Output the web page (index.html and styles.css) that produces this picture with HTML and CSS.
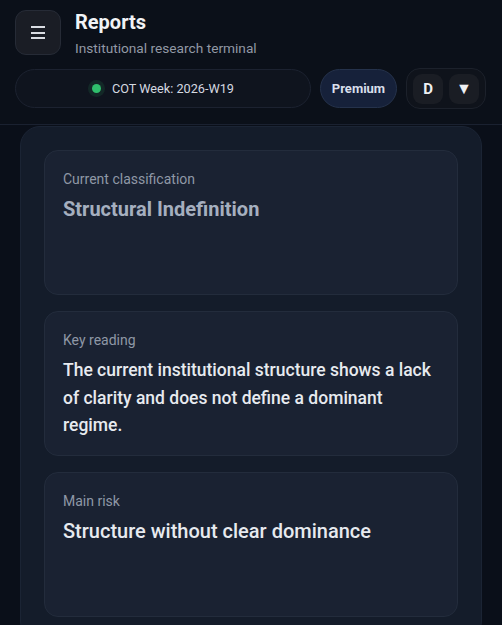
FILE: index.html
```html
<!DOCTYPE html>
<html>
<head>
  <title>Reports</title>
  <link rel="stylesheet" href="styles.css">
</head>
<body>
<div class="header">
  <div class="header-top">
    <button class="menu-btn" type="button">
      <span></span><span></span><span></span>
    </button>
    <div class="title-block">
      <h1>Reports</h1>
      <div class="subtitle">Institutional research terminal</div>
    </div>
  </div>
  <div class="header-bar">
    <div class="status-pill"><span class="dot"></span>COT Week: 2026-W19</div>
    <div class="plan-pill">Premium</div>
    <div class="user-group">
      <div class="user-btn">D</div>
      <div class="user-btn caret">&#9660;</div>
    </div>
  </div>
</div>

<div class="main">
  <div class="card">
    <div class="card-label">Current classification</div>
    <div class="card-value muted">Structural Indefinition</div>
  </div>
  <div class="card">
    <div class="card-label">Key reading</div>
    <div class="card-text">The current institutional structure shows a lack of clarity and does not define a dominant regime.</div>
  </div>
  <div class="card">
    <div class="card-label">Main risk</div>
    <div class="card-value">Structure without clear dominance</div>
  </div>
</div>
</body>
</html>
```

FILE: styles.css
```css
body {
  font-family: Roboto, "Liberation Sans", sans-serif;
  margin: 0;
  padding: 0;
  background: #0a0f19;
  color: #e6e9ef;
  height: 625px;
  overflow: hidden;
}

.header {
  padding: 10px 16px 15px 15px;
  border-bottom: 1px solid #1a2130;
  background: #0b1019;
}
.header-top {
  display: flex;
  align-items: flex-start;
  gap: 14px;
}
.menu-btn {
  width: 46px;
  height: 45px;
  border-radius: 11px;
  border: 1px solid #262b36;
  background: #1a1d25;
  display: flex;
  flex-direction: column;
  align-items: center;
  justify-content: center;
  gap: 3.3px;
  padding: 0;
}
.menu-btn span {
  display: block;
  width: 14px;
  height: 2px;
  background: #d9dce2;
}
.title-block {
  padding-top: 1px;
}
.title-block h1 {
  margin: 0;
  font-size: 20px;
  font-weight: 700;
  line-height: 22px;
  color: #f1f3f6;
}
.subtitle {
  margin-top: 7px;
  font-size: 13.7px;
  color: #9299a5;
}

.header-bar {
  display: flex;
  align-items: center;
  gap: 9px;
  margin-top: 12px;
}
.status-pill {
  flex: 1;
  height: 39px;
  border-radius: 20px;
  background: #0f141e;
  border: 1px solid #1c2230;
  display: flex;
  align-items: center;
  justify-content: center;
  gap: 11px;
  font-size: 12.7px;
  color: #d5d9e0;
  box-sizing: border-box;
}
.dot {
  width: 9px;
  height: 9px;
  border-radius: 50%;
  background: #2fbf6c;
  box-shadow: 0 0 0 4px rgba(47, 191, 108, 0.12);
}
.plan-pill {
  width: 77px;
  height: 39px;
  box-sizing: border-box;
  border-radius: 20px;
  background: #16213a;
  border: 1px solid #25324b;
  display: flex;
  align-items: center;
  justify-content: center;
  font-size: 13px;
  font-weight: 700;
  color: #d8dfeb;
}
.user-group {
  width: 80px;
  height: 41px;
  box-sizing: border-box;
  border-radius: 14px;
  background: #0f131b;
  border: 1px solid #1c212b;
  display: flex;
  align-items: center;
  justify-content: space-between;
  padding: 0 6px;
}
.user-btn {
  width: 30px;
  height: 30px;
  border-radius: 9px;
  background: #1a1d24;
  display: flex;
  align-items: center;
  justify-content: center;
  font-size: 15px;
  font-weight: 700;
  color: #eef0f3;
}
.user-btn.caret {
  font-size: 16px;
}

.main {
  margin: 1px 20px 0 20px;
  padding: 23px;
  background: #141c2a;
  border: 1px solid #1b2434;
  border-radius: 20px;
  display: flex;
  flex-direction: column;
  gap: 16px;
}
.card {
  min-height: 145px;
  box-sizing: border-box;
  padding: 18px 18px 15px;
  background: #1a2232;
  border: 1px solid #232c3c;
  border-radius: 14px;
}
.card-label {
  font-size: 14px;
  line-height: 20px;
  color: #8f98a6;
}
.card-value {
  margin-top: 7px;
  font-size: 20px;
  line-height: 27.5px;
  font-weight: 500;
  color: #e7eaef;
}
.card-value.muted {
  font-weight: 700;
  color: #a5afbf;
}
.card-text {
  margin-top: 7px;
  font-size: 17.5px;
  line-height: 27.5px;
  font-weight: 500;
  color: #e7eaef;
}
```
